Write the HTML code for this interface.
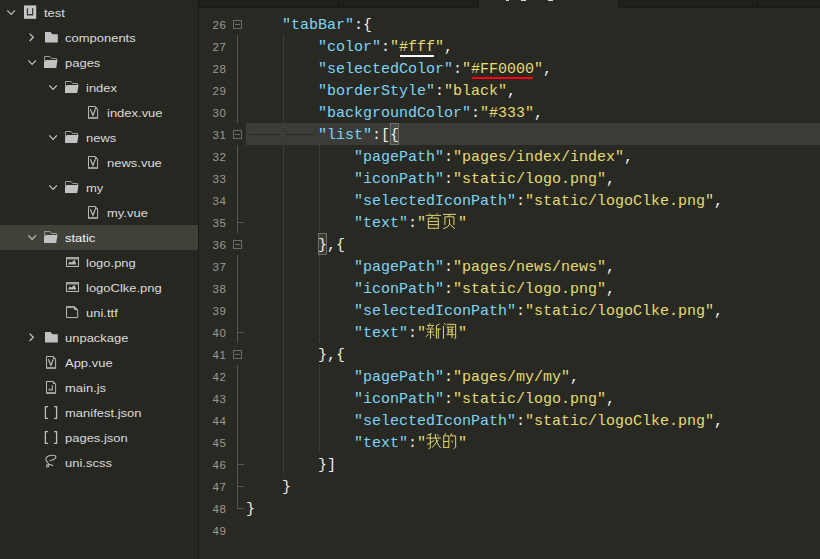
<!DOCTYPE html>
<html><head><meta charset="utf-8">
<style>
*{margin:0;padding:0;box-sizing:border-box}
html,body{width:820px;height:559px;overflow:hidden;background:#282923}
body{position:relative;font-family:"Liberation Sans",sans-serif}
#side{position:absolute;left:0;top:0;width:198px;height:559px;background:#262721}
#sep{position:absolute;left:198px;top:0;width:1px;height:559px;background:#1b1c18}
.row{position:absolute;left:0;width:198px;height:25px}
.row.sel{background:#41413a}
.t{position:absolute;top:0;height:25px;line-height:25px;font-size:11.8px;transform:scaleX(1.1);transform-origin:0 0;color:#dcdcdc;white-space:pre}
svg.ic{position:absolute;overflow:visible}
#tabs{position:absolute;left:199px;top:0;width:621px;height:8px;background:#1e1f1b;border-bottom:1px solid #181816}
#atab{position:absolute;left:479px;top:0;width:139px;height:8px;background:#282923;overflow:hidden}
.ln{position:absolute;left:198px;width:28.6px;text-align:right;font-family:"Liberation Sans",sans-serif;font-size:11.5px;letter-spacing:0.6px;color:#9a9a94;height:22px;line-height:22px}
.cl{position:absolute;z-index:2;left:246px;height:22px;line-height:22px;font-family:"Liberation Mono",monospace;font-size:15px;color:#f0f0ea;white-space:pre}
.k{color:#7fd4f5}
.s{color:#e6db74}
</style></head><body>
<div id="side">
<div class="row sel" style="top:225px"></div>
<svg class="ic" style="left:7px;top:10px" width="9" height="6"><polyline points="0.3,0.4 4.1,4.4 7.9,0.4" fill="none" stroke="#c2c2c2" stroke-width="1.3"/></svg><svg class="ic" style="left:24px;top:5px" width="13" height="14"><rect x="0" y="0.4" width="12.2" height="13.4" fill="#c6c6c6"/><path d="M2.8,3.2 H4.1 V9 H8 V3.2 H9.3 V10.4 H2.8 Z" fill="#3a3a36"/></svg><div class="t" style="left:44px;top:1px">test</div><svg class="ic" style="left:29px;top:33px" width="6" height="9"><polyline points="0.6,0.6 4.3,4.3 0.6,8" fill="none" stroke="#c2c2c2" stroke-width="1.3"/></svg><svg class="ic" style="left:45px;top:32px" width="13" height="11"><path d="M0,0 H5.5 L7.5,2.2 H12.8 V10.6 H0 Z" fill="#c2c2c2"/></svg><div class="t" style="left:65px;top:26px">components</div><svg class="ic" style="left:28px;top:60px" width="9" height="6"><polyline points="0.3,0.4 4.1,4.4 7.9,0.4" fill="none" stroke="#c2c2c2" stroke-width="1.3"/></svg><svg class="ic" style="left:44px;top:56px" width="14" height="12"><path d="M0.5,8 V0.5 H6 L7.5,2.5 H12.5 V4" fill="none" stroke="#9a9a96" stroke-width="1"/><path d="M1.6,4 H13.5 L12.2,12 H0 V7.5 Z" fill="#c2c2c2"/></svg><div class="t" style="left:65px;top:51px">pages</div><svg class="ic" style="left:49px;top:85px" width="9" height="6"><polyline points="0.3,0.4 4.1,4.4 7.9,0.4" fill="none" stroke="#c2c2c2" stroke-width="1.3"/></svg><svg class="ic" style="left:65px;top:81px" width="14" height="12"><path d="M0.5,8 V0.5 H6 L7.5,2.5 H12.5 V4" fill="none" stroke="#9a9a96" stroke-width="1"/><path d="M1.6,4 H13.5 L12.2,12 H0 V7.5 Z" fill="#c2c2c2"/></svg><div class="t" style="left:86px;top:76px">index</div><svg class="ic" style="left:88px;top:106px" width="11" height="13"><path d="M0.5,0.5 H7.2 L9.6,2.9 V12.5 H0.5 Z" fill="none" stroke="#b8b8b8" stroke-width="1"/><path d="M7,0.5 L9.6,3.1 H7 Z" fill="#b8b8b8"/><rect x="0.5" y="11" width="9.1" height="1.8" fill="#999"/><polyline points="2.4,3.2 4.9,9.4 7.3,3.2" fill="none" stroke="#bdbdbd" stroke-width="1.2"/></svg><div class="t" style="left:107px;top:101px">index.vue</div><svg class="ic" style="left:49px;top:135px" width="9" height="6"><polyline points="0.3,0.4 4.1,4.4 7.9,0.4" fill="none" stroke="#c2c2c2" stroke-width="1.3"/></svg><svg class="ic" style="left:65px;top:131px" width="14" height="12"><path d="M0.5,8 V0.5 H6 L7.5,2.5 H12.5 V4" fill="none" stroke="#9a9a96" stroke-width="1"/><path d="M1.6,4 H13.5 L12.2,12 H0 V7.5 Z" fill="#c2c2c2"/></svg><div class="t" style="left:86px;top:126px">news</div><svg class="ic" style="left:88px;top:156px" width="11" height="13"><path d="M0.5,0.5 H7.2 L9.6,2.9 V12.5 H0.5 Z" fill="none" stroke="#b8b8b8" stroke-width="1"/><path d="M7,0.5 L9.6,3.1 H7 Z" fill="#b8b8b8"/><rect x="0.5" y="11" width="9.1" height="1.8" fill="#999"/><polyline points="2.4,3.2 4.9,9.4 7.3,3.2" fill="none" stroke="#bdbdbd" stroke-width="1.2"/></svg><div class="t" style="left:107px;top:151px">news.vue</div><svg class="ic" style="left:49px;top:185px" width="9" height="6"><polyline points="0.3,0.4 4.1,4.4 7.9,0.4" fill="none" stroke="#c2c2c2" stroke-width="1.3"/></svg><svg class="ic" style="left:65px;top:181px" width="14" height="12"><path d="M0.5,8 V0.5 H6 L7.5,2.5 H12.5 V4" fill="none" stroke="#9a9a96" stroke-width="1"/><path d="M1.6,4 H13.5 L12.2,12 H0 V7.5 Z" fill="#c2c2c2"/></svg><div class="t" style="left:86px;top:176px">my</div><svg class="ic" style="left:88px;top:206px" width="11" height="13"><path d="M0.5,0.5 H7.2 L9.6,2.9 V12.5 H0.5 Z" fill="none" stroke="#b8b8b8" stroke-width="1"/><path d="M7,0.5 L9.6,3.1 H7 Z" fill="#b8b8b8"/><rect x="0.5" y="11" width="9.1" height="1.8" fill="#999"/><polyline points="2.4,3.2 4.9,9.4 7.3,3.2" fill="none" stroke="#bdbdbd" stroke-width="1.2"/></svg><div class="t" style="left:107px;top:201px">my.vue</div><svg class="ic" style="left:28px;top:235px" width="9" height="6"><polyline points="0.3,0.4 4.1,4.4 7.9,0.4" fill="none" stroke="#c2c2c2" stroke-width="1.3"/></svg><svg class="ic" style="left:44px;top:231px" width="14" height="12"><path d="M0.5,8 V0.5 H6 L7.5,2.5 H12.5 V4" fill="none" stroke="#9a9a96" stroke-width="1"/><path d="M1.6,4 H13.5 L12.2,12 H0 V7.5 Z" fill="#c2c2c2"/></svg><div class="t" style="left:65px;top:226px;color:#f4f4f4">static</div><svg class="ic" style="left:66px;top:257px" width="13" height="10"><rect x="0.5" y="0.5" width="12" height="9" fill="none" stroke="#b8b8b8" stroke-width="1"/><rect x="0.5" y="0.5" width="12" height="2" fill="#9c9c9c"/><path d="M2,7.6 L3.6,4.6 L5.5,5.6 L8.4,2.8 L10.4,7.6 Z" fill="#b8b8b8"/></svg><div class="t" style="left:86px;top:251px">logo.png</div><svg class="ic" style="left:66px;top:282px" width="13" height="10"><rect x="0.5" y="0.5" width="12" height="9" fill="none" stroke="#b8b8b8" stroke-width="1"/><rect x="0.5" y="0.5" width="12" height="2" fill="#9c9c9c"/><path d="M2,7.6 L3.6,4.6 L5.5,5.6 L8.4,2.8 L10.4,7.6 Z" fill="#b8b8b8"/></svg><div class="t" style="left:86px;top:276px">logoClke.png</div><svg class="ic" style="left:66px;top:306px" width="13" height="12"><path d="M0.5,0.5 H8.4 L11.7,3.8 V11.5 H0.5 Z" fill="none" stroke="#b8b8b8" stroke-width="1"/><rect x="0.5" y="0.5" width="8" height="1.6" fill="#9c9c9c"/><path d="M8.2,0.5 L11.7,4.1 H8.2 Z" fill="#c0c0c0"/></svg><div class="t" style="left:86px;top:301px">uni.ttf</div><svg class="ic" style="left:29px;top:333px" width="6" height="9"><polyline points="0.6,0.6 4.3,4.3 0.6,8" fill="none" stroke="#c2c2c2" stroke-width="1.3"/></svg><svg class="ic" style="left:45px;top:332px" width="13" height="11"><path d="M0,0 H5.5 L7.5,2.2 H12.8 V10.6 H0 Z" fill="#c2c2c2"/></svg><div class="t" style="left:65px;top:326px">unpackage</div><svg class="ic" style="left:46px;top:356px" width="11" height="13"><path d="M0.5,0.5 H7.2 L9.6,2.9 V12.5 H0.5 Z" fill="none" stroke="#b8b8b8" stroke-width="1"/><path d="M7,0.5 L9.6,3.1 H7 Z" fill="#b8b8b8"/><rect x="0.5" y="11" width="9.1" height="1.8" fill="#999"/><polyline points="2.4,3.2 4.9,9.4 7.3,3.2" fill="none" stroke="#bdbdbd" stroke-width="1.2"/></svg><div class="t" style="left:65px;top:351px">App.vue</div><svg class="ic" style="left:46px;top:381px" width="11" height="13"><path d="M0.5,0.5 H7.2 L9.6,2.9 V12.5 H0.5 Z" fill="none" stroke="#b8b8b8" stroke-width="1"/><path d="M7,0.5 L9.6,3.1 H7 Z" fill="#b8b8b8"/><rect x="0.5" y="11" width="9.1" height="1.8" fill="#999"/><polyline points="6.3,4.3 6.3,9 3.2,9 3.2,7.4" fill="none" stroke="#bdbdbd" stroke-width="1.1"/></svg><div class="t" style="left:65px;top:376px">main.js</div><svg class="ic" style="left:44px;top:406px" width="14" height="13"><polyline points="4,0.6 1.4,0.6 1.4,12.3 4,12.3" fill="none" stroke="#bcbcbc" stroke-width="1.3"/><polyline points="10,0.6 12.6,0.6 12.6,12.3 10,12.3" fill="none" stroke="#bcbcbc" stroke-width="1.3"/></svg><div class="t" style="left:65px;top:401px">manifest.json</div><svg class="ic" style="left:44px;top:431px" width="14" height="13"><polyline points="4,0.6 1.4,0.6 1.4,12.3 4,12.3" fill="none" stroke="#bcbcbc" stroke-width="1.3"/><polyline points="10,0.6 12.6,0.6 12.6,12.3 10,12.3" fill="none" stroke="#bcbcbc" stroke-width="1.3"/></svg><div class="t" style="left:65px;top:426px">pages.json</div><svg class="ic" style="left:42px;top:452px" width="18" height="18"><path d="M7.5,8.5 C10,8.5 14,7 14,5 C14,3 10,2.8 7,3.8 C4.5,4.6 3.5,6.5 4,8 C4.5,10 7.5,11.5 7,13.5 C6.7,15 5,15.5 4.5,14.5 C4,13 6,12 8,12.5 C9.5,12.8 10.5,13.5 11,14" fill="none" stroke="#b8b8b8" stroke-width="1.1"/></svg><div class="t" style="left:65px;top:451px">uni.scss</div>
</div>
<div id="sep"></div>
<div id="code"><div style="position:absolute;left:246px;top:123px;width:574px;height:22px;background:#3b3b38"></div><div class="ln" style="top:14px">26</div><div class="cl" style="top:15px">    <span class="k">"tabBar"</span>:{</div><div class="ln" style="top:36px">27</div><div class="cl" style="top:37px">        <span class="k">"color"</span>:<span class="s">"#fff"</span>,</div><div class="ln" style="top:58px">28</div><div class="cl" style="top:59px">        <span class="k">"selectedColor"</span>:<span class="s">"#FF0000"</span>,</div><div class="ln" style="top:80px">29</div><div class="cl" style="top:81px">        <span class="k">"borderStyle"</span>:<span class="s">"black"</span>,</div><div class="ln" style="top:102px">30</div><div class="cl" style="top:103px">        <span class="k">"backgroundColor"</span>:<span class="s">"#333"</span>,</div><div class="ln" style="top:124px">31</div><div class="cl" style="top:125px">        <span class="k">"list"</span>:[{</div><div class="ln" style="top:146px">32</div><div class="cl" style="top:147px">            <span class="k">"pagePath"</span>:<span class="s">"pages/index/index"</span>,</div><div class="ln" style="top:168px">33</div><div class="cl" style="top:169px">            <span class="k">"iconPath"</span>:<span class="s">"static/logo.png"</span>,</div><div class="ln" style="top:190px">34</div><div class="cl" style="top:191px">            <span class="k">"selectedIconPath"</span>:<span class="s">"static/logoClke.png"</span>,</div><div class="ln" style="top:212px">35</div><div class="cl" style="top:213px">            <span class="k">"text"</span>:<span class="s">"</span><span style="display:inline-block;width:32px;height:1px"></span><span class="s">"</span></div><div class="ln" style="top:234px">36</div><div class="cl" style="top:235px">        },{</div><div class="ln" style="top:256px">37</div><div class="cl" style="top:257px">            <span class="k">"pagePath"</span>:<span class="s">"pages/news/news"</span>,</div><div class="ln" style="top:278px">38</div><div class="cl" style="top:279px">            <span class="k">"iconPath"</span>:<span class="s">"static/logo.png"</span>,</div><div class="ln" style="top:300px">39</div><div class="cl" style="top:301px">            <span class="k">"selectedIconPath"</span>:<span class="s">"static/logoClke.png"</span>,</div><div class="ln" style="top:322px">40</div><div class="cl" style="top:323px">            <span class="k">"text"</span>:<span class="s">"</span><span style="display:inline-block;width:32px;height:1px"></span><span class="s">"</span></div><div class="ln" style="top:344px">41</div><div class="cl" style="top:345px">        },{</div><div class="ln" style="top:366px">42</div><div class="cl" style="top:367px">            <span class="k">"pagePath"</span>:<span class="s">"pages/my/my"</span>,</div><div class="ln" style="top:388px">43</div><div class="cl" style="top:389px">            <span class="k">"iconPath"</span>:<span class="s">"static/logo.png"</span>,</div><div class="ln" style="top:410px">44</div><div class="cl" style="top:411px">            <span class="k">"selectedIconPath"</span>:<span class="s">"static/logoClke.png"</span>,</div><div class="ln" style="top:432px">45</div><div class="cl" style="top:433px">            <span class="k">"text"</span>:<span class="s">"</span><span style="display:inline-block;width:32px;height:1px"></span><span class="s">"</span></div><div class="ln" style="top:454px">46</div><div class="cl" style="top:455px">        }]</div><div class="ln" style="top:476px">47</div><div class="cl" style="top:477px">    }</div><div class="ln" style="top:498px">48</div><div class="cl" style="top:499px">}</div><div class="ln" style="top:520px">49</div><div class="cl" style="top:521px"></div></div>
<div id="tabs"></div>
<div id="atab"></div>
<div style="position:absolute;left:233px;top:20px;width:9px;height:9px;border:1px solid #6c6c66"></div><div style="position:absolute;left:235px;top:24px;width:5px;height:1px;background:#6c6c66"></div><div style="position:absolute;left:233px;top:130px;width:9px;height:9px;border:1px solid #6c6c66"></div><div style="position:absolute;left:235px;top:134px;width:5px;height:1px;background:#6c6c66"></div><div style="position:absolute;left:233px;top:240px;width:9px;height:9px;border:1px solid #6c6c66"></div><div style="position:absolute;left:235px;top:244px;width:5px;height:1px;background:#6c6c66"></div><div style="position:absolute;left:233px;top:350px;width:9px;height:9px;border:1px solid #6c6c66"></div><div style="position:absolute;left:235px;top:354px;width:5px;height:1px;background:#6c6c66"></div><div style="position:absolute;left:237px;top:35px;width:1px;height:88px;background:#595953"></div><div style="position:absolute;left:237px;top:145px;width:1px;height:88px;background:#595953"></div><div style="position:absolute;left:237px;top:255px;width:1px;height:88px;background:#595953"></div><div style="position:absolute;left:237px;top:365px;width:1px;height:132px;background:#595953"></div><div style="position:absolute;left:237px;top:497px;width:1px;height:12px;background:#595953"></div><div style="position:absolute;left:237px;top:222px;width:7px;height:1px;background:#595953"></div><div style="position:absolute;left:237px;top:332px;width:7px;height:1px;background:#595953"></div><div style="position:absolute;left:237px;top:464px;width:7px;height:1px;background:#595953"></div><div style="position:absolute;left:237px;top:486px;width:7px;height:1px;background:#595953"></div><div style="position:absolute;left:237px;top:508px;width:7px;height:1px;background:#595953"></div><div style="position:absolute;left:283px;top:35px;width:1px;height:440px;background:repeating-linear-gradient(to bottom,#4e4e48 0,#4e4e48 1px,#282923 1px,#282923 2px)"></div><div style="position:absolute;left:319px;top:145px;width:1px;height:88px;background:repeating-linear-gradient(to bottom,#4e4e48 0,#4e4e48 1px,#282923 1px,#282923 2px)"></div><div style="position:absolute;left:319px;top:255px;width:1px;height:88px;background:repeating-linear-gradient(to bottom,#4e4e48 0,#4e4e48 1px,#282923 1px,#282923 2px)"></div><div style="position:absolute;left:319px;top:365px;width:1px;height:88px;background:repeating-linear-gradient(to bottom,#4e4e48 0,#4e4e48 1px,#282923 1px,#282923 2px)"></div><div style="position:absolute;left:249px;top:134px;width:31px;height:1px;background:#2a2a26"></div><div style="position:absolute;left:285px;top:134px;width:31px;height:1px;background:#2a2a26"></div><div style="position:absolute;left:390px;top:123px;width:9px;height:22px;border:1px solid #6e6e6a;background:#4a4a46"></div><div style="position:absolute;left:318px;top:233px;width:9px;height:22px;border:1px solid #6e6e6a;background:#3a3a35"></div><div style="position:absolute;left:400px;top:55px;width:34px;height:2px;background:#ffffff"></div><div style="position:absolute;left:472px;top:77px;width:61px;height:2px;background:#ff0000"></div><svg style="position:absolute;left:422px;top:210px" width="40" height="24" viewBox="0 0 820 492"><path d="M150,70 L175,95 M320,70 L295,95 M80,110 H390 M215,110 L195,160 M130,165 V385 M335,165 V385 M130,165 H335 M130,235 H335 M130,300 H335 M130,375 H335 M430,90 H695 M570,90 L545,135 M470,140 V305 M470,140 H655 M655,140 V305 M565,185 V290 M565,290 Q540,360 435,385 M580,300 L675,385" fill="none" stroke="#e6db74" stroke-width="20"/></svg><svg style="position:absolute;left:422px;top:320px" width="40" height="24" viewBox="0 0 820 492"><path d="M150,65 L165,95 M100,110 H245 M130,130 L150,165 M215,130 L195,165 M85,185 H250 M105,245 H245 M175,190 V385 M140,285 L80,345 M215,285 L250,330 M360,80 L290,120 M295,120 V385 M295,185 H385 M335,185 V385 M455,65 L485,100 M440,120 V385 M510,90 H690 V370 L660,385 M505,145 H660 M530,200 H640 M530,245 H640 M500,300 H665 M535,145 V300 M615,145 V370" fill="none" stroke="#e6db74" stroke-width="20"/></svg><svg style="position:absolute;left:422px;top:430px" width="40" height="24" viewBox="0 0 820 492"><path d="M200,75 L110,105 M85,165 H390 M170,80 V370 L135,385 M105,300 L250,215 M270,80 Q290,280 385,370 M335,200 L210,360 M310,90 L345,125 M490,65 L455,110 M445,120 V370 M550,120 V370 M445,120 H550 M445,235 H550 M445,355 H550 M610,65 L575,135 M590,120 H690 V350 L650,385 M610,215 L630,260" fill="none" stroke="#e6db74" stroke-width="20"/></svg><div style="position:absolute;left:338px;top:0;width:1px;height:8px;background:#171714"></div><div style="position:absolute;left:478px;top:0;width:1px;height:8px;background:#171714"></div><div style="position:absolute;left:757px;top:0;width:1px;height:8px;background:#171714"></div><div style="position:absolute;left:506px;top:0;width:3px;height:1px;background:#d8d8d8"></div><div style="position:absolute;left:521px;top:0;width:5px;height:1px;background:#d8d8d8"></div><div style="position:absolute;left:548px;top:0;width:5px;height:1px;background:#d8d8d8"></div>
</body></html>
